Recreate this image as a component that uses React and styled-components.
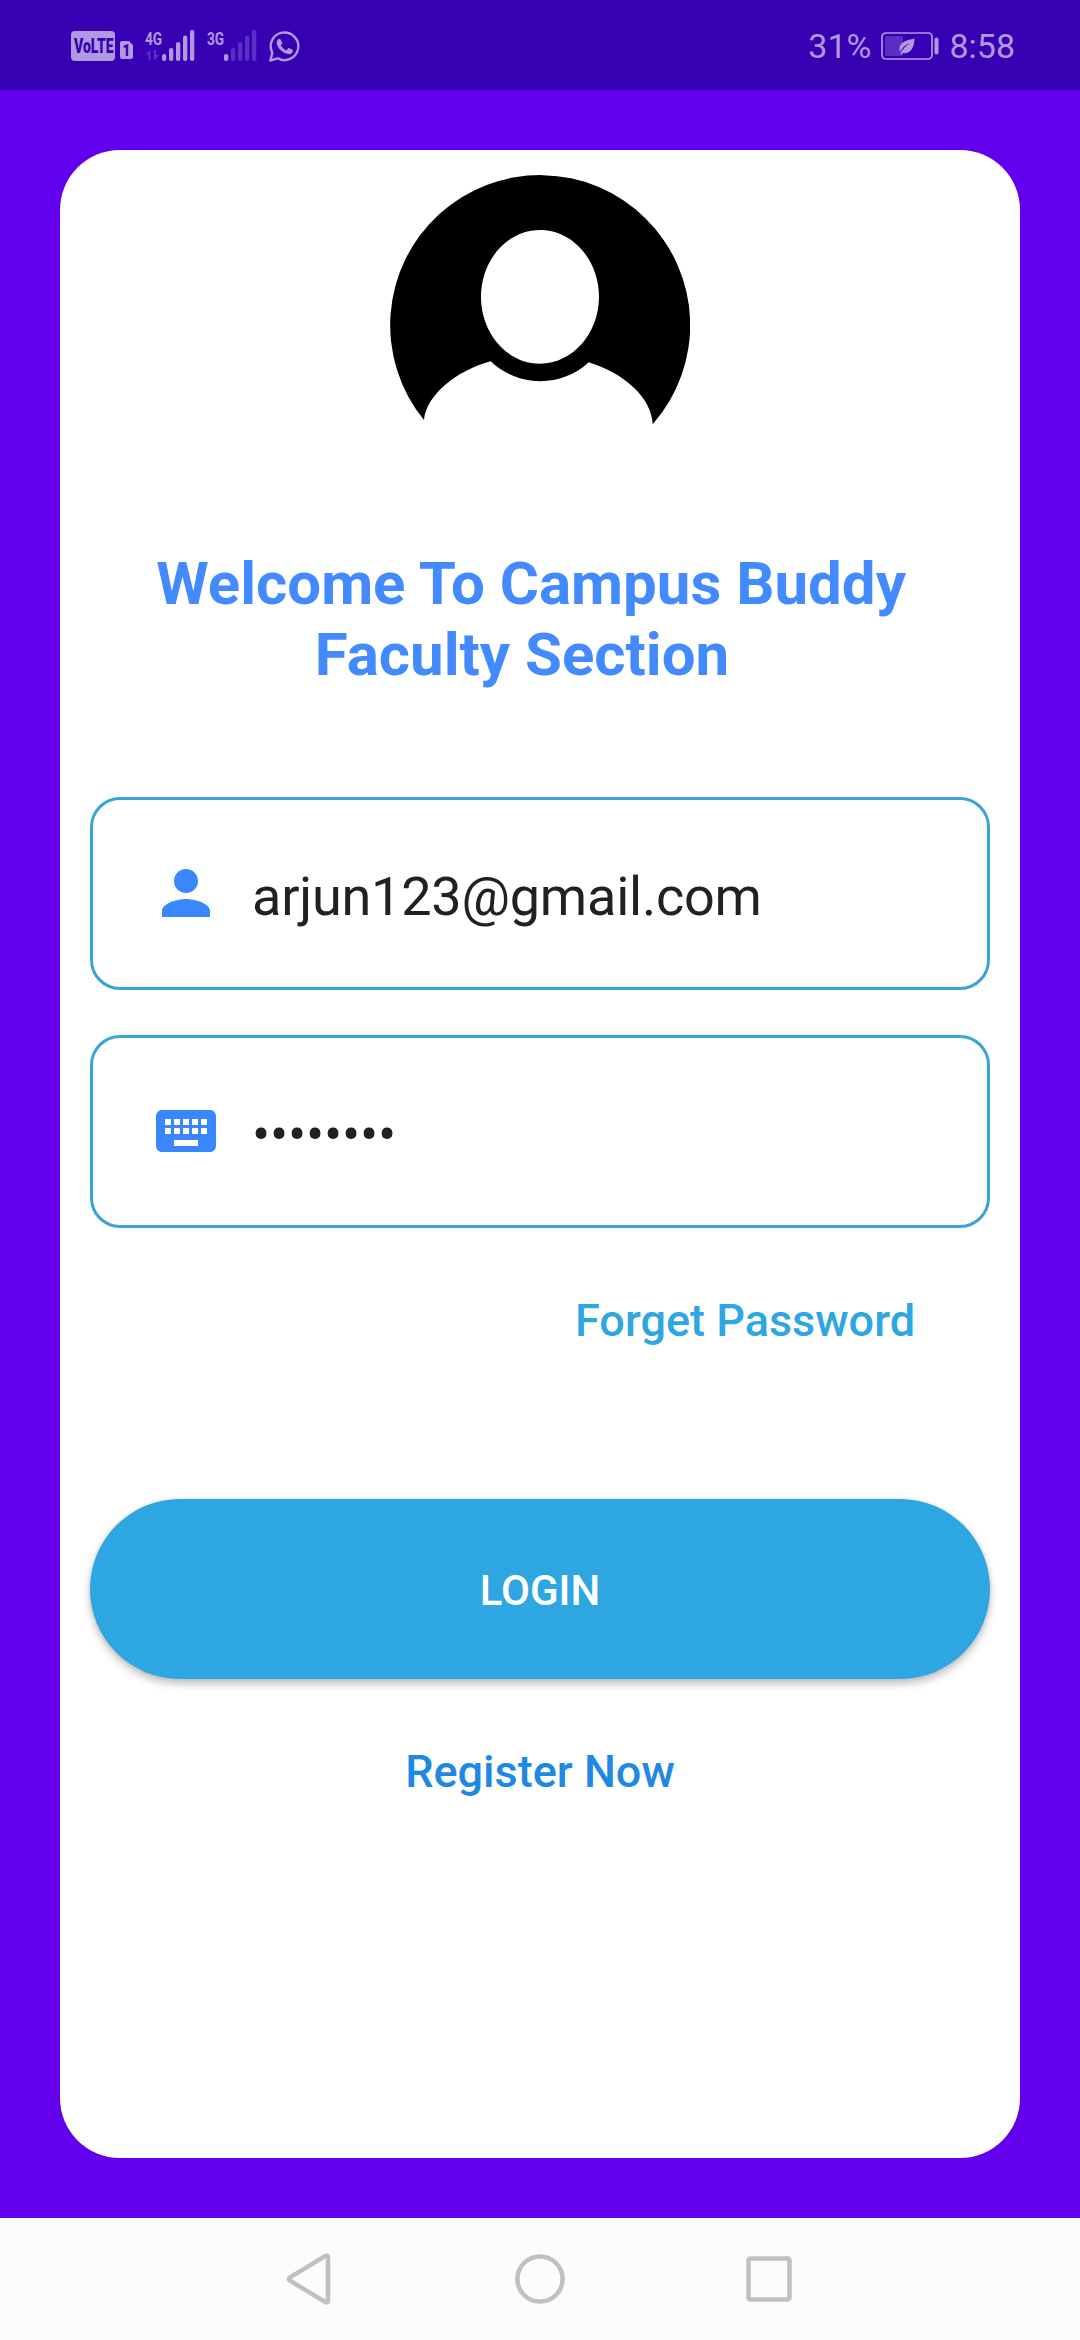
import React from "react";
import styled, { createGlobalStyle } from "styled-components";

const GlobalStyle = createGlobalStyle`
  *, *::before, *::after { box-sizing: border-box; }
  body { margin: 0; background: #6200ee; font-family: Roboto, "Noto Sans", sans-serif; }
  svg { display: block; flex: none; }
`;

const TINT = "#b199e1";
const DIM = "#5b2fc4";

const Screen = styled.div`
  width: 1080px;
  height: 2340px;
  display: flex;
  flex-direction: column;
  background: #6200ee;
`;

const StatusBar = styled.header`
  height: 90px;
  flex: none;
  display: flex;
  justify-content: space-between;
  align-items: center;
  padding: 2px 65px 0 71px;
  background: #3700b3;
`;

const StatusGroup = styled.div`
  display: flex;
  align-items: center;
  gap: ${(p) => p.$gap}px;
`;

const StatusText = styled.span`
  font-size: 34px;
  line-height: 40px;
  color: ${TINT};
  white-space: nowrap;
`;

const Page = styled.main`
  flex: 1;
  padding: 60px;
  display: flex;
`;

const Card = styled.section`
  flex: 1;
  display: flex;
  flex-direction: column;
  align-items: stretch;
  padding: 25px 30px 0;
  border-radius: 60px;
  background: #fff;
`;

const AvatarWrap = styled.div`
  display: flex;
  justify-content: center;
`;

const Title = styled.h1`
  margin: 73px 0 107px;
  display: flex;
  flex-direction: column;
  align-items: center;
  font-size: 60px;
  line-height: 71px;
  font-weight: 700;
  color: #448aff;
`;

const TitleLine = styled.span`
  white-space: nowrap;
  padding-right: ${(p) => p.$trail}px;
`;

const Fields = styled.div`
  display: flex;
  flex-direction: column;
  gap: 45px;
`;

const Field = styled.div`
  height: 193px;
  display: flex;
  align-items: center;
  gap: 30px;
  padding: 0 57px;
  border: 3px solid #3ba3d5;
  border-radius: 30px;

  svg { margin-bottom: 1px; }
`;

const FieldText = styled.span`
  padding-top: 6px;
  font-size: 54px;
  line-height: 64px;
  color: #212121;
  white-space: nowrap;
  letter-spacing: -0.22px;
`;

const TextLink = styled.a`
  align-self: ${(p) => p.$align};
  margin: ${(p) => p.$margin};
  font-size: 45px;
  line-height: 60px;
  font-weight: 500;
  color: ${(p) => p.$color};
  white-space: nowrap;
`;

const LoginButton = styled.button`
  height: 180px;
  padding: 3px 0 0;
  border: 0;
  border-radius: 90px;
  background: #2da6e1;
  color: #fff;
  font-family: inherit;
  font-size: 42px;
  font-weight: 500;
  line-height: 50px;
  box-shadow: 0 5px 8px rgba(0, 0, 0, 0.24), 0 0 4px rgba(0, 0, 0, 0.1);
`;

const NavBar = styled.nav`
  height: 122px;
  flex: none;
  display: flex;
  justify-content: center;
  align-items: center;
  gap: 177px;
  background: #fcfcfc;
`;

const VolteBadge = () => (
  <svg width="62" height="40" viewBox="0 -5 62 40">
    <rect width="44" height="30" rx="4" fill={TINT} />
    <text transform="translate(3 22) scale(0.7 1)" fontSize="20" fontWeight="900" fill="#3700b3">VoLTE</text>
    <path d="M51 10h7l4 4v12a2 2 0 0 1-2 2h-9a2 2 0 0 1-2-2V12a2 2 0 0 1 2-2z" fill={TINT} />
    <text transform="translate(51.500 25) scale(0.85 1)" fontSize="16" fontWeight="900" fill="#3700b3">1</text>
  </svg>
);

const BARS = [
  [17, 7],
  [24, 13],
  [31, 19],
  [38, 25.5],
  [45, 31],
];

const Signal = ({ label, level, arrows }) => (
  <svg width="50" height="42" viewBox="0 -5 50 42">
    <text transform="translate(0 14.500) scale(0.72 1)" fontSize="19" fontWeight="700" fill={TINT}>{label}</text>
    {arrows && <path d="M0 24.500L5.500 20v10.500H3.500v-6zM9 20h2v5h3.500L9 30.500z" fill={DIM} />}
    {BARS.map(([x, h], i) => (
      <rect key={x} x={x} y={31 - h} width="4.300" height={h} rx="2" fill={i < level ? TINT : DIM} />
    ))}
  </svg>
);

const WhatsApp = () => (
  <svg width="32" height="33" viewBox="2 0 32 33" fill="none">
    <path d="M2.300 30.500l2.100-7.600A13.800 13.800 0 1 1 9.900 28.400z" transform="translate(1 0)" stroke={TINT} strokeWidth="2.400" strokeLinejoin="round" />
    <path
      transform="translate(1 0)"
      d="M10.400 9.300c.6-.6 1.800-.7 2.200.1l1.500 3.300c.3.700-.1 1.300-1.200 2.500 1.300 2.500 3 4 5.500 5.200l1.600-1.900c.4-.5.8-.5 1.300-.3l3 1.500c.7.400.7.800.5 1.700-.5 1.900-2.600 2.900-4.400 2.700-5.700-.7-11.200-6.100-11.700-10.800-.1-1.500.6-3 1.700-4z"
      fill={TINT}
    />
  </svg>
);

const Battery = () => (
  <svg width="58" height="28" viewBox="0 0 58 28">
    <rect x="1" y="1" width="50" height="26" rx="4" fill="none" stroke={TINT} strokeWidth="1.700" />
    <rect x="4" y="4" width="18" height="20" rx="2" fill={DIM} />
    <rect x="53.500" y="5.500" width="4" height="17" rx="2" fill={TINT} />
    <path d="M33.500 6.500C25 8.500 18.500 10 18.500 17c0 1.300.2 2.300.5 3 2.500-5 5.500-7 9.500-8.500-4 2.500-7 5.500-9 10.500l1.500.5.500-1.400c7.500 1 12-5 12-14.600z" fill={TINT} />
  </svg>
);

const Avatar = () => (
  <svg width="300" height="300" viewBox="390 175 300 300">
    <path
      fillRule="evenodd"
      d="M424 420A150 150 0 1 1 652.700 424.300C652 398 624 373 588.700 362.300C562 387.600 518 387.600 490.700 361.300C455 371 426 396 424 420zM540 230C507.500 230 481 260 481 296.800S507.500 363.700 540 363.700S599 333.600 599 296.800S572.500 230 540 230z"
      fill="#000"
    />
  </svg>
);

const PersonIcon = () => (
  <svg width="72" height="72" viewBox="0 0 24 24" fill="#3a86ff">
    <path d="M12 12c2.210 0 4-1.790 4-4s-1.790-4-4-4-4 1.790-4 4 1.790 4 4 4zm0 2c-2.670 0-8 1.340-8 4v2h16v-2c0-2.660-5.330-4-8-4z" />
  </svg>
);

const KeyboardIcon = () => (
  <svg width="72" height="72" viewBox="0 0 24 24" fill="#3a86ff">
    <path d="M20 5H4c-1.100 0-1.990.9-1.990 2L2 17c0 1.100.9 2 2 2h16c1.100 0 2-.9 2-2V7c0-1.100-.9-2-2-2zm-9 3h2v2h-2V8zm0 3h2v2h-2v-2zM8 8h2v2H8V8zm0 3h2v2H8v-2zm-1 2H5v-2h2v2zm0-3H5V8h2v2zm9 7H8v-2h8v2zm0-4h-2v-2h2v2zm0-3h-2V8h2v2zm3 3h-2v-2h2v2zm0-3h-2V8h2v2z" />
  </svg>
);

const BackIcon = () => (
  <svg width="52" height="52" viewBox="-1 0 52 52" fill="none" stroke="#c0c0c0" strokeWidth="4.500" strokeLinejoin="round">
    <path d="M3.600 24.600L39.500 2.800Q42 2 42 4.600V47.400Q42 50 39.500 49.200L3.600 27.400Q2 26 3.600 24.600z" />
  </svg>
);

const HomeIcon = () => (
  <svg width="52" height="52" viewBox="0 0 52 52" fill="none" stroke="#c0c0c0" strokeWidth="4.500">
    <circle cx="26" cy="26" r="22.600" />
  </svg>
);

const RecentIcon = () => (
  <svg width="52" height="52" viewBox="0 0 52 52" fill="none" stroke="#c0c0c0" strokeWidth="4.500">
    <rect x="5.500" y="5.500" width="41" height="41" rx="2" />
  </svg>
);

export default function App() {
  return (
    <Screen>
      <GlobalStyle />
      <StatusBar>
        <StatusGroup $gap={12}>
          <VolteBadge />
          <Signal label="4G" level={5} arrows />
          <Signal label="3G" level={1} />
          <WhatsApp />
        </StatusGroup>
        <StatusGroup $gap={10}>
          <StatusText>31%</StatusText>
          <Battery />
          <StatusText>8:58</StatusText>
        </StatusGroup>
      </StatusBar>
      <Page>
        <Card>
          <AvatarWrap>
            <Avatar />
          </AvatarWrap>
          <Title>
            <TitleLine $trail={18}>Welcome To Campus Buddy</TitleLine>
            <TitleLine $trail={36}>Faculty Section</TitleLine>
          </Title>
          <Fields>
            <Field>
              <PersonIcon />
              <FieldText>arjun123@gmail.com</FieldText>
            </Field>
            <Field>
              <KeyboardIcon />
              <FieldText>••••••••</FieldText>
            </Field>
          </Fields>
          <TextLink $align="flex-end" $margin="63px 75px 148px 0" $color="#2da6e1">
            Forget Password
          </TextLink>
          <LoginButton>LOGIN</LoginButton>
          <TextLink $align="center" $margin="63px 0 0" $color="#1e88e5">
            Register Now
          </TextLink>
        </Card>
      </Page>
      <NavBar>
        <BackIcon />
        <HomeIcon />
        <RecentIcon />
      </NavBar>
    </Screen>
  );
}
